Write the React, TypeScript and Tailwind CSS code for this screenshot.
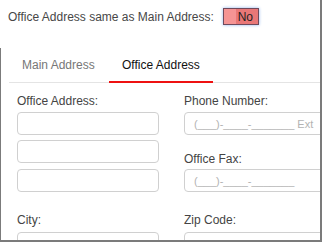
export default function App() {
  return (
    <div
      className="w-[322px] h-[242px] overflow-hidden bg-white border-r-2 border-b-2 border-[#7b7b7b] text-[12px] leading-[14px]"
      style={{ fontFamily: '"Liberation Sans", Arial, sans-serif' }}
    >
      {/* SAME-AS TOGGLE */}
      <div className="h-[30px] pt-[8px] pl-[8px] flex items-start">
        <span className="mt-[2px] text-[#474747]">Office Address same as Main Address:</span>
        <div className="ml-[9px] flex h-[17px] w-[36px] border border-[#6d4a5c] shadow-[0_0_3px_#8fb4ec]">
          <div className="w-[12px] bg-[#f59494]" />
          <div className="flex-1 bg-[#e97777] flex items-center justify-center pr-[3px] text-[#1f1f1f]">No</div>
        </div>
      </div>

      <div className="h-[212px] border-l border-[#7b7b7b]">
        {/* TABS */}
        <div className="mt-[18px] ml-[8px] flex h-[35px] border-b border-[#e4e4e4]">
          <div className="w-[100px] pl-[13px] flex items-center text-[#777]">Main Address</div>
          <div className="h-[35px] -mb-px px-[13px] flex items-center border-b-2 border-[#ee1111] text-[#111]">
            Office Address
          </div>
        </div>

        {/* FORM */}
        <div className="pt-[11px] pl-[16px] flex gap-[25px]">
          <div className="w-[142px] shrink-0 flex flex-col">
            <label className="mb-[4px] font-medium text-[#444]">Office Address:</label>
            <input className="h-[23px] rounded-[4px] border border-[#d0d0d0]" />
            <input className="mt-[5px] h-[23px] rounded-[4px] border border-[#d0d0d0]" />
            <input className="mt-[6px] h-[23px] rounded-[4px] border border-[#d0d0d0]" />
            <label className="mt-[21px] mb-[5px] font-medium text-[#444]">City:</label>
            <input className="h-[23px] rounded-[4px] border border-[#d0d0d0]" />
          </div>

          <div className="w-[160px] shrink-0 flex flex-col">
            <label className="mb-[4px] font-medium text-[#444]">Phone Number:</label>
            <input
              className="h-[23px] rounded-[4px] border border-[#d0d0d0] pl-[9px] text-[11px] placeholder:text-[#b3b3b3]"
              placeholder="(___)-____-_______ Ext"
            />
            <label className="mt-[17px] mb-[3px] font-medium text-[#444]">Office Fax:</label>
            <input
              className="h-[23px] rounded-[4px] border border-[#d0d0d0] pl-[9px] text-[11px] placeholder:text-[#b3b3b3]"
              placeholder="(___)-____-_______"
            />
            <label className="mt-[21px] mb-[5px] font-medium text-[#444]">Zip Code:</label>
            <input className="h-[23px] rounded-[4px] border border-[#d0d0d0]" />
          </div>
        </div>
      </div>
    </div>
  );
}
